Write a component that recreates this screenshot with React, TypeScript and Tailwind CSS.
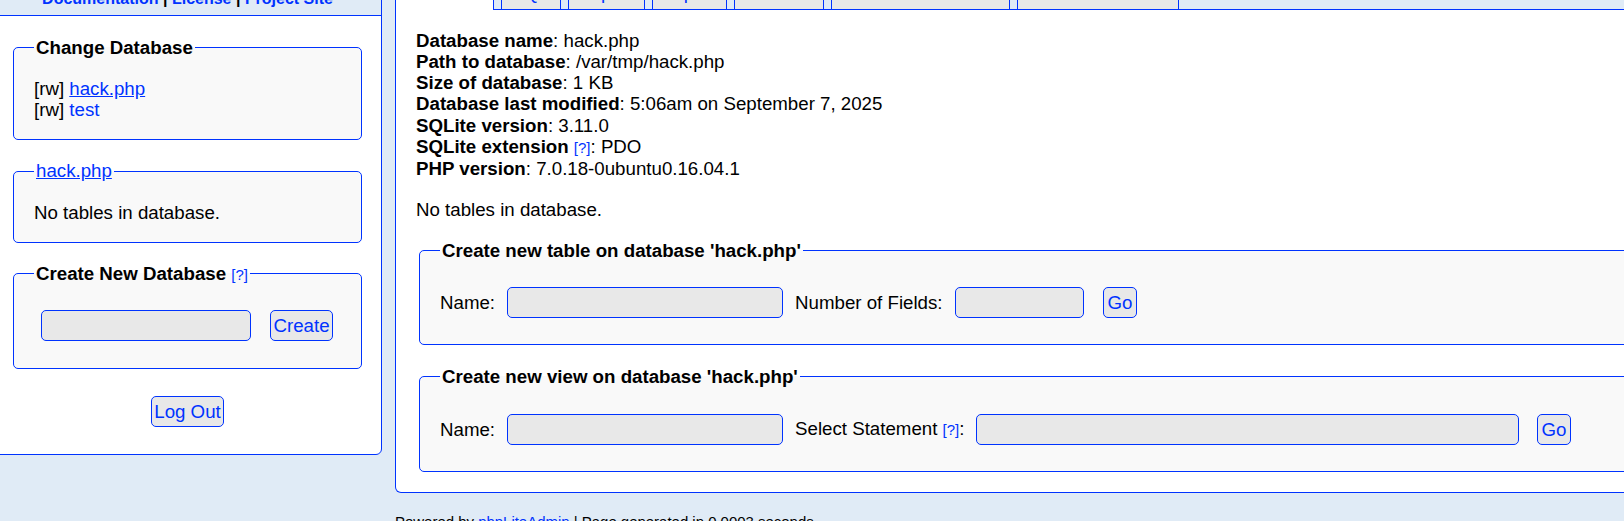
import type { ReactNode } from "react";

// Small blue help marker used next to a few labels
const Help = () => (
  <a className="cursor-pointer text-[14.96px] font-normal text-[#0033ff]">[?]</a>
);

const Field = ({ legend, children, className = "" }: { legend: ReactNode; children: ReactNode; className?: string }) => (
  <fieldset className={`rounded-[5px] border border-[#0033ff] bg-[#f9f9f9] px-[20px] pt-[20px] pb-[19px] ${className}`}>
    <legend className="px-[2px]">{legend}</legend>
    {children}
  </fieldset>
);

const TextInput = ({ className = "" }: { className?: string }) => (
  <input type="text" className={`h-[31px] rounded-[5px] border border-[#0033ff] bg-[#e8e8e8] outline-none ${className}`} />
);

const Button = ({ label, className = "" }: { label: string; className?: string }) => (
  <button className={`h-[31px] rounded-[5px] border border-[#0033ff] bg-[#e8e8e8] px-[2.5px] leading-[21px] text-[#0033ff] ${className}`}>
    {label}
  </button>
);

const info: [string, string][] = [
  ["Database name", "hack.php"],
  ["Path to database", "/var/tmp/hack.php"],
  ["Size of database", "1 KB"],
  ["Database last modified", "5:06am on September 7, 2025"],
  ["SQLite version", "3.11.0"],
];

const tabs = ["SQL", "Export", "Import", "Vacuum", "Rename Database", "Delete Database"];

export default function App() {
  return (
    <div className="h-[521px] w-full overflow-hidden bg-[#e0ebf6] font-['Liberation_Sans',Arial,sans-serif] text-[18.7px] leading-[21.15px] text-black">
      <div className="-mt-[25px] flex items-start">
        {/* left navigation */}
        <div className="-ml-[7px] w-[389px] shrink-0 rounded-br-[6px] border border-[#0033ff] bg-white pb-[27px]">
          <div className="flex h-[40px] items-end justify-center border-b border-[#0033ff] bg-[#e0ebf6] pb-[7px] text-[16px] leading-[18.4px] font-bold">
            <a className="text-[#0033ff]">Documentation</a>
            <span className="whitespace-pre"> | </span>
            <a className="text-[#0033ff]">License</a>
            <span className="whitespace-pre"> | </span>
            <a className="text-[#0033ff]">Project Site</a>
          </div>

          <div className="px-[19px]">
            <Field className="mt-[21px]" legend={<span className="font-bold">Change Database</span>}>
              <div>
                [rw] <a className="text-[#0033ff] underline">hack.php</a>
              </div>
              <div>
                [rw] <a className="text-[#0033ff]">test</a>
              </div>
            </Field>

            <Field className="mt-[20px]" legend={<a className="text-[#0033ff] underline">hack.php</a>}>
              <div>No tables in database.</div>
            </Field>

            <Field
              className="mt-[20px]"
              legend={
                <span>
                  <span className="font-bold">Create New Database</span> <Help />
                </span>
              }
            >
              <div className="flex h-[44px] items-center pb-[2px]">
                <TextInput className="ml-[7px] w-[210px]" />
                <Button label="Create" className="ml-[19px]" />
              </div>
            </Field>
          </div>

          <div className="mt-[27px] flex justify-center">
            <Button label="Log Out" />
          </div>
        </div>

        {/* main area */}
        <div className="ml-[13px] w-[1320px] shrink-0">
          <div className="flex">
            <div className="border-x border-t border-[#0033ff] bg-white px-[10.4px] pt-[6px] pb-[7px] leading-[21px]">Structure</div>
            <div className="flex flex-1 items-end gap-[7px] border-b border-[#0033ff] pl-[7px]">
              {tabs.map((t) => (
                <a key={t} className="border-x border-t border-[#0033ff] bg-[#e8e8e8] px-[10.4px] pt-[6px] pb-[6px] leading-[21px] text-[#0033ff]">
                  {t}
                </a>
              ))}
            </div>
          </div>

          <div className="rounded-bl-[6px] border-x border-b border-[#0033ff] bg-white px-[20px] pt-[20px] pb-[20px]">
            {info.map(([k, v]) => (
              <div key={k}>
                <b>{k}</b>: {v}
              </div>
            ))}
            <div>
              <b>SQLite extension</b> <Help />: PDO
            </div>
            <div>
              <b>PHP version</b>: 7.0.18-0ubuntu0.16.04.1
            </div>
            <div className="mt-[20px]">No tables in database.</div>

            <Field className="ml-[3px] mt-[20px]" legend={<span className="font-bold">Create new table on database 'hack.php'</span>}>
              <div className="flex h-[44px] items-center pb-[2px]">
                <span>Name:</span>
                <TextInput className="ml-[11.5px] w-[276px]" />
                <span className="ml-[12.5px]">Number of Fields:</span>
                <TextInput className="ml-[12.5px] w-[129px]" />
                <Button label="Go" className="ml-[19px] w-[34px]" />
              </div>
            </Field>

            <Field className="ml-[3px] mt-[21px]" legend={<span className="font-bold">Create new view on database 'hack.php'</span>}>
              <div className="flex h-[44px] items-center">
                <span>Name:</span>
                <TextInput className="ml-[11.5px] w-[276px]" />
                <span className="ml-[12.5px]">
                  Select Statement <Help />:
                </span>
                <TextInput className="ml-[11.5px] w-[543px]" />
                <Button label="Go" className="ml-[18px] w-[34px]" />
              </div>
            </Field>
          </div>

          <div className="mt-[20px] text-[14.96px] leading-[17px]">
            Powered by <a className="text-[#0033ff]">phpLiteAdmin</a> | Page generated in 0.0003 seconds.
          </div>
        </div>
      </div>
    </div>
  );
}
